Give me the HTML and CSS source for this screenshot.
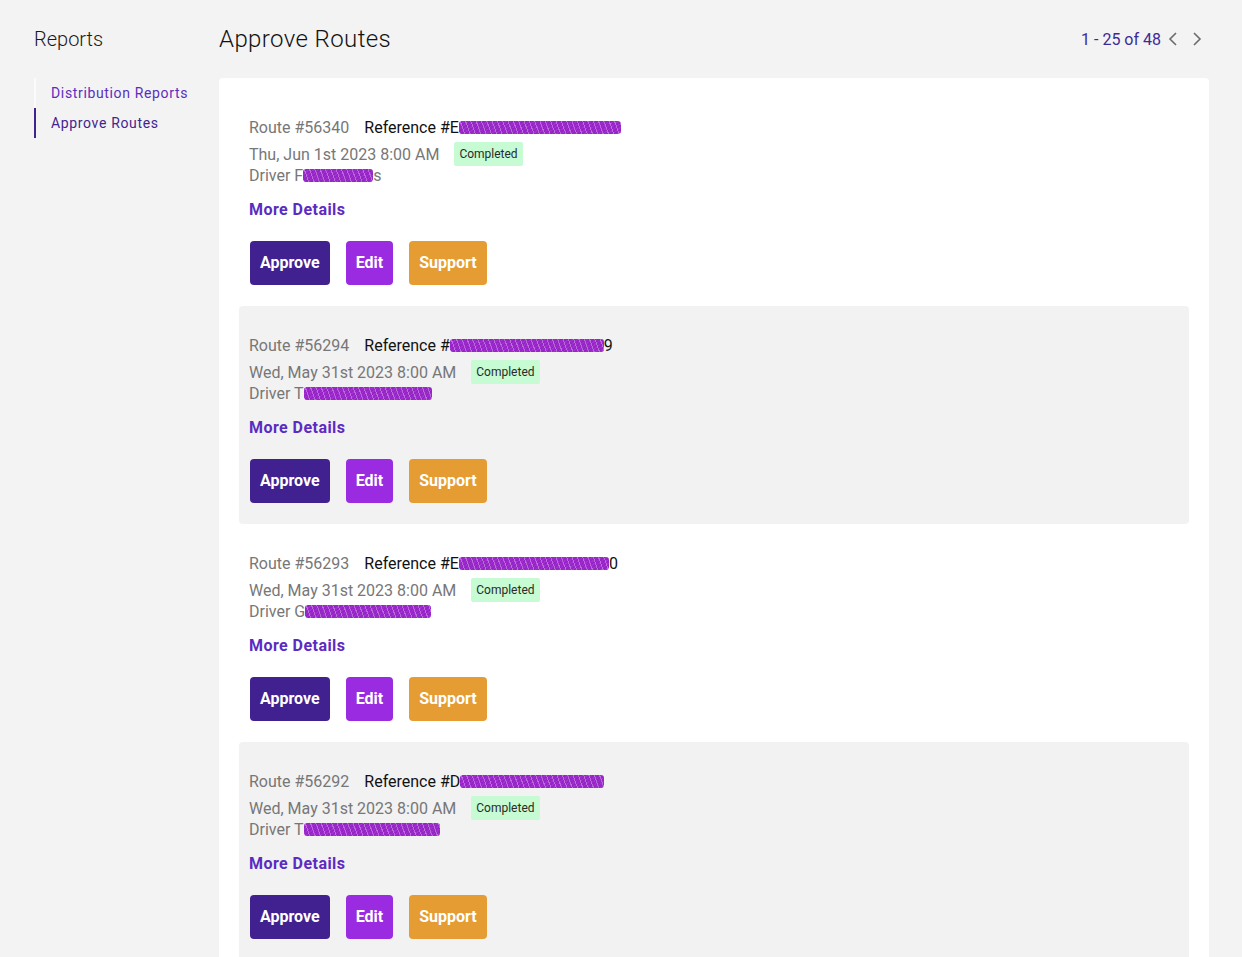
FILE: index.html
```html
<!DOCTYPE html>
<html lang="en">
<head>
    <meta charset="UTF-8">
    <meta name="viewport" content="width=device-width, initial-scale=1.0">
    <title>Approve Routes</title>
    <link rel="stylesheet" href="styles.css">
</head>
<body>
    <div class="page">
        <aside class="sidebar">
            <div class="sidebar-title">Reports</div>
            <nav class="nav">
                <a class="nav-item">Distribution Reports</a>
                <a class="nav-item active">Approve Routes</a>
            </nav>
        </aside>
        <main class="main">
            <div class="main-header">
                <h1 class="title">Approve Routes</h1>
                <div class="pager">
                    <span class="pager-text">1 - 25 of 48</span>
                    <span class="chevron">
                        <svg width="10" height="16" viewBox="0 0 10 16"><path d="M8 2 L2 8 L8 14" fill="none" stroke="#6b6b6b" stroke-width="1.6"/></svg>
                    </span>
                    <span class="chevron">
                        <svg width="10" height="16" viewBox="0 0 10 16"><path d="M2 2 L8 8 L2 14" fill="none" stroke="#6b6b6b" stroke-width="1.6"/></svg>
                    </span>
                </div>
            </div>
            <div class="card">
                <div class="route">
                    <div class="route-line"><span class="muted">Route #56340</span><span class="ref">Reference #E<span class="scribble" style="width:162px"></span></span></div>
                    <div class="date-line"><span class="muted">Thu, Jun 1st 2023 8:00 AM</span><span class="badge">Completed</span></div>
                    <div class="driver-line"><span class="muted">Driver F<span class="scribble" style="width:70px"></span>s</span></div>
                    <a class="details">More Details</a>
                    <div class="actions">
                        <div class="btn approve">Approve</div>
                        <div class="btn edit">Edit</div>
                        <div class="btn support">Support</div>
                    </div>
                </div>
                <div class="route">
                    <div class="route-line"><span class="muted">Route #56294</span><span class="ref">Reference #<span class="scribble" style="width:154px"></span>9</span></div>
                    <div class="date-line"><span class="muted">Wed, May 31st 2023 8:00 AM</span><span class="badge">Completed</span></div>
                    <div class="driver-line"><span class="muted">Driver T<span class="scribble" style="width:128px"></span></span></div>
                    <a class="details">More Details</a>
                    <div class="actions">
                        <div class="btn approve">Approve</div>
                        <div class="btn edit">Edit</div>
                        <div class="btn support">Support</div>
                    </div>
                </div>
                <div class="route">
                    <div class="route-line"><span class="muted">Route #56293</span><span class="ref">Reference #E<span class="scribble" style="width:150px"></span>0</span></div>
                    <div class="date-line"><span class="muted">Wed, May 31st 2023 8:00 AM</span><span class="badge">Completed</span></div>
                    <div class="driver-line"><span class="muted">Driver G<span class="scribble" style="width:126px"></span></span></div>
                    <a class="details">More Details</a>
                    <div class="actions">
                        <div class="btn approve">Approve</div>
                        <div class="btn edit">Edit</div>
                        <div class="btn support">Support</div>
                    </div>
                </div>
                <div class="route">
                    <div class="route-line"><span class="muted">Route #56292</span><span class="ref">Reference #D<span class="scribble" style="width:144px"></span></span></div>
                    <div class="date-line"><span class="muted">Wed, May 31st 2023 8:00 AM</span><span class="badge">Completed</span></div>
                    <div class="driver-line"><span class="muted">Driver T<span class="scribble" style="width:136px"></span></span></div>
                    <a class="details">More Details</a>
                    <div class="actions">
                        <div class="btn approve">Approve</div>
                        <div class="btn edit">Edit</div>
                        <div class="btn support">Support</div>
                    </div>
                </div>
            </div>
        </main>
    </div>
</body>
</html>
```
FILE: styles.css
```css
body {
    margin: 0;
    background: #f3f3f3;
    font-family: Roboto, "Liberation Sans", sans-serif;
    color: #111;
}
.page {
    display: flex;
    flex-direction: row;
    padding: 22px 33px 0 34px;
}
.sidebar {
    width: 185px;
    flex-shrink: 0;
}
.sidebar-title {
    font-size: 20px;
    font-weight: 300;
    line-height: 34px;
    margin-bottom: 22px;
    color: #1a1a1a;
}
.nav {
    display: flex;
    flex-direction: column;
}
.nav-item {
    display: block;
    height: 30px;
    line-height: 30px;
    padding-left: 15px;
    border-left: 2px solid #fbfbfb;
    font-size: 14px;
    letter-spacing: 0.65px;
    color: #5b2dbf;
    cursor: pointer;
}
.nav-item.active {
    border-left-color: #41238f;
    color: #42248f;
}
.main {
    flex-grow: 1;
}
.main-header {
    display: flex;
    flex-direction: row;
    align-items: center;
    justify-content: space-between;
    height: 34px;
    margin-bottom: 22px;
}
.title {
    margin: 0;
    font-size: 24px;
    font-weight: 300;
    letter-spacing: 0.4px;
    line-height: 34px;
    color: #111;
}
.pager {
    display: flex;
    align-items: center;
    gap: 4px;
    padding-right: 2px;
}
.pager-text {
    font-size: 16px;
    color: #3d2a99;
    margin-right: -2px;
}
.chevron {
    display: flex;
    width: 20px;
    justify-content: center;
    cursor: pointer;
}
.card {
    background: #fff;
    border-radius: 4px;
    padding: 10px 20px;
    min-height: 900px;
}
.route {
    padding: 30px 10px 21px 10px;
    border-radius: 4px;
}
.route:nth-child(even) {
    background: #f2f2f2;
}
.route-line {
    display: flex;
    gap: 15px;
    font-size: 16px;
    line-height: 20px;
}
.muted {
    color: #777;
}
.ref {
    color: #111;
}
.date-line {
    display: flex;
    align-items: center;
    gap: 15px;
    height: 24px;
    margin-top: 4px;
    font-size: 16px;
}
.badge {
    display: inline-block;
    height: 24px;
    line-height: 24px;
    padding: 0 5px;
    border-radius: 2px;
    background: #c6fbd3;
    color: #2a2a2a;
    font-size: 12px;
}
.driver-line {
    font-size: 16px;
    line-height: 20px;
}
.scribble {
    display: inline-block;
    height: 13px;
    vertical-align: -1px;
    background:
        repeating-linear-gradient(70deg, rgba(255, 255, 255, 0.3) 0 1px, transparent 1px 5px),
        repeating-linear-gradient(-40deg, rgba(110, 20, 160, 0.3) 0 2px, transparent 2px 3px),
        #a52ed4;
    border-radius: 3px;
    filter: blur(0.5px);
}
.details {
    display: block;
    margin-top: 14px;
    font-size: 16px;
    font-weight: 700;
    line-height: 20px;
    color: #5b2bc2;
    letter-spacing: 0.45px;
    cursor: pointer;
}
.actions {
    display: flex;
    gap: 16px;
    margin-top: 21px;
    padding-left: 1px;
}
.btn {
    height: 44px;
    line-height: 44px;
    padding: 0 10px;
    border-radius: 4px;
    font-size: 16px;
    font-weight: 700;
    color: #fff;
    cursor: pointer;
}
.approve {
    background: #40218f;
    min-width: 59px;
}
.edit {
    background: #9a2be0;
}
.support {
    background: #e59c33;
}
```
